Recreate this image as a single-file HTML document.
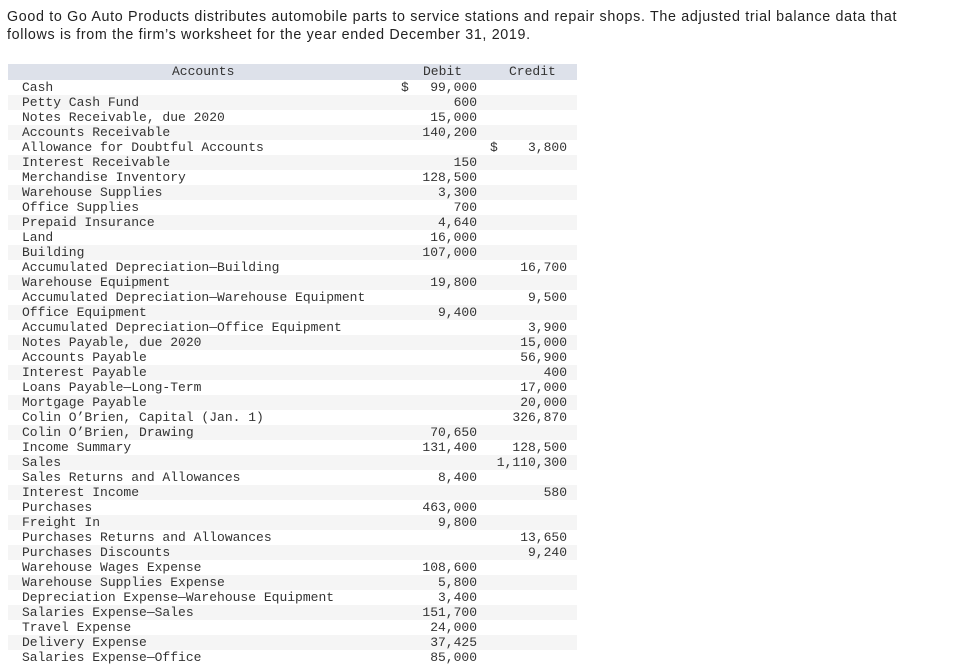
<!DOCTYPE html>
<html><head><meta charset="utf-8"><style>
body{margin:0;background:#fff;width:958px;height:656px;overflow:hidden;position:relative}
.hd{position:absolute;left:7px;top:8px;width:950px;white-space:nowrap;font:14.3px/18px "Liberation Sans",sans-serif;letter-spacing:0.66px;color:#222}
.t{position:absolute;left:8px;top:64px;width:569px;font:13px/15px "Liberation Mono",monospace;color:#333}
.r{height:15px;position:relative;white-space:pre}
.r:nth-child(odd){background:#f5f5f5}
.h{background:#dde1ea !important;height:16px;line-height:16px}
.a{position:absolute;left:14px;top:0}
.d{position:absolute;right:100px;top:0}
.c{position:absolute;right:10px;top:0}
.ds{position:absolute;left:393px}
.cs{position:absolute;left:482px}
</style></head><body>
<div class="hd">Good to Go Auto Products distributes automobile parts to service stations and repair shops. The adjusted trial balance data that<br>follows is from the firm’s worksheet for the year ended December 31, 2019.</div>
<div class="t">
<div class="r h"><span style="position:absolute;left:164px">Accounts</span><span style="position:absolute;left:415px">Debit</span><span style="position:absolute;left:501px">Credit</span></div>
<div class="r"><span class="a">Cash</span><span class="ds">$</span><span class="d">99,000</span></div>
<div class="r"><span class="a">Petty Cash Fund</span><span class="d">600</span></div>
<div class="r"><span class="a">Notes Receivable, due 2020</span><span class="d">15,000</span></div>
<div class="r"><span class="a">Accounts Receivable</span><span class="d">140,200</span></div>
<div class="r"><span class="a">Allowance for Doubtful Accounts</span><span class="cs">$</span><span class="c">3,800</span></div>
<div class="r"><span class="a">Interest Receivable</span><span class="d">150</span></div>
<div class="r"><span class="a">Merchandise Inventory</span><span class="d">128,500</span></div>
<div class="r"><span class="a">Warehouse Supplies</span><span class="d">3,300</span></div>
<div class="r"><span class="a">Office Supplies</span><span class="d">700</span></div>
<div class="r"><span class="a">Prepaid Insurance</span><span class="d">4,640</span></div>
<div class="r"><span class="a">Land</span><span class="d">16,000</span></div>
<div class="r"><span class="a">Building</span><span class="d">107,000</span></div>
<div class="r"><span class="a">Accumulated Depreciation—Building</span><span class="c">16,700</span></div>
<div class="r"><span class="a">Warehouse Equipment</span><span class="d">19,800</span></div>
<div class="r"><span class="a">Accumulated Depreciation—Warehouse Equipment</span><span class="c">9,500</span></div>
<div class="r"><span class="a">Office Equipment</span><span class="d">9,400</span></div>
<div class="r"><span class="a">Accumulated Depreciation—Office Equipment</span><span class="c">3,900</span></div>
<div class="r"><span class="a">Notes Payable, due 2020</span><span class="c">15,000</span></div>
<div class="r"><span class="a">Accounts Payable</span><span class="c">56,900</span></div>
<div class="r"><span class="a">Interest Payable</span><span class="c">400</span></div>
<div class="r"><span class="a">Loans Payable—Long-Term</span><span class="c">17,000</span></div>
<div class="r"><span class="a">Mortgage Payable</span><span class="c">20,000</span></div>
<div class="r"><span class="a">Colin O’Brien, Capital (Jan. 1)</span><span class="c">326,870</span></div>
<div class="r"><span class="a">Colin O’Brien, Drawing</span><span class="d">70,650</span></div>
<div class="r"><span class="a">Income Summary</span><span class="d">131,400</span><span class="c">128,500</span></div>
<div class="r"><span class="a">Sales</span><span class="c">1,110,300</span></div>
<div class="r"><span class="a">Sales Returns and Allowances</span><span class="d">8,400</span></div>
<div class="r"><span class="a">Interest Income</span><span class="c">580</span></div>
<div class="r"><span class="a">Purchases</span><span class="d">463,000</span></div>
<div class="r"><span class="a">Freight In</span><span class="d">9,800</span></div>
<div class="r"><span class="a">Purchases Returns and Allowances</span><span class="c">13,650</span></div>
<div class="r"><span class="a">Purchases Discounts</span><span class="c">9,240</span></div>
<div class="r"><span class="a">Warehouse Wages Expense</span><span class="d">108,600</span></div>
<div class="r"><span class="a">Warehouse Supplies Expense</span><span class="d">5,800</span></div>
<div class="r"><span class="a">Depreciation Expense—Warehouse Equipment</span><span class="d">3,400</span></div>
<div class="r"><span class="a">Salaries Expense—Sales</span><span class="d">151,700</span></div>
<div class="r"><span class="a">Travel Expense</span><span class="d">24,000</span></div>
<div class="r"><span class="a">Delivery Expense</span><span class="d">37,425</span></div>
<div class="r"><span class="a">Salaries Expense—Office</span><span class="d">85,000</span></div>
</div>
</body></html>
